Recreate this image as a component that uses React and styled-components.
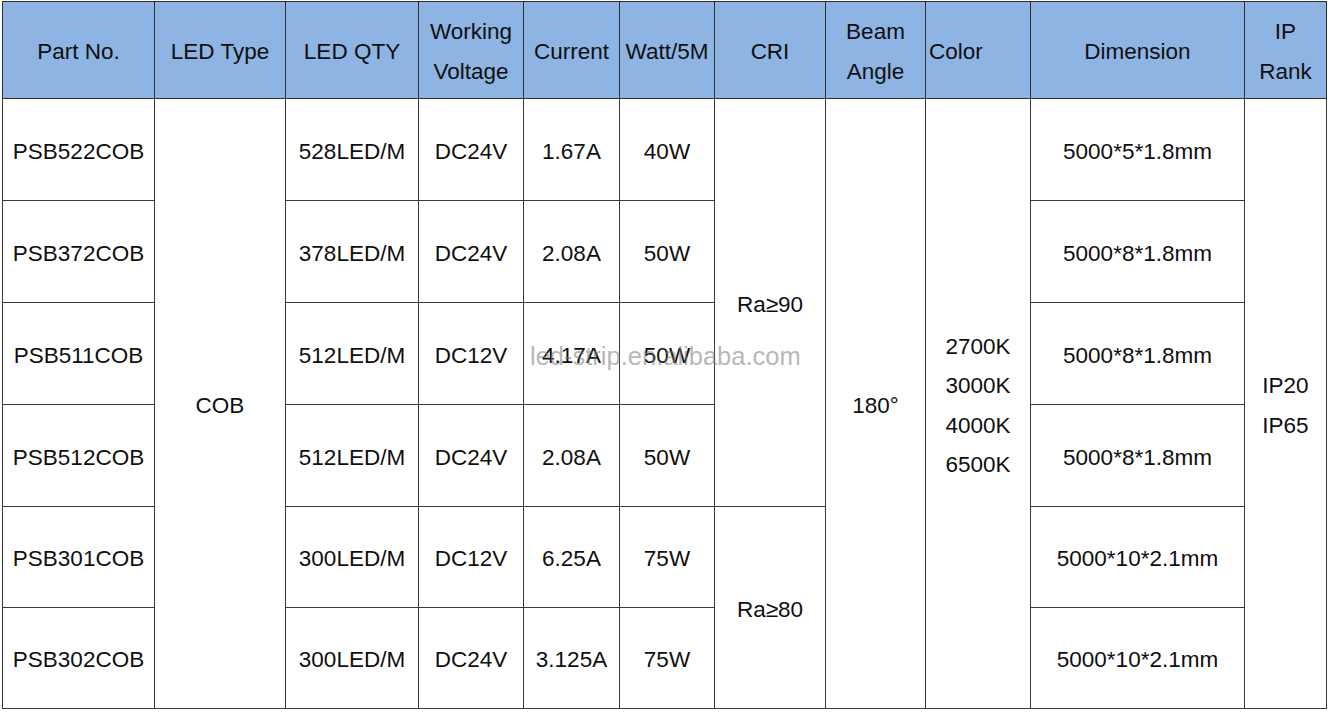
import React from "react";
import styled, { createGlobalStyle } from "styled-components";

const GlobalStyle = createGlobalStyle`
  html, body {
    margin: 0;
    padding: 0;
    background: #ffffff;
  }
  body {
    font-family: "Liberation Sans", Arial, sans-serif;
    color: #0f0f0f;
  }
`;

const Page = styled.div`
  position: relative;
  width: 1330px;
  height: 713px;
  padding: 1px 0 0 2px;
  box-sizing: border-box;
`;

const Table = styled.table`
  border-collapse: collapse;
  table-layout: fixed;
  width: 1324px;
  font-size: 22.5px;
  border: 1.5px solid #333;
`;

const HeadRow = styled.tr`
  height: 97px;
  background-color: #8db4e3;
`;

const BodyRow = styled.tr`
  height: ${(p) => p.$h || 102}px;
`;

const HeadCell = styled.th`
  font-weight: normal;
  line-height: 40px;
  padding: 3px ${(p) => (p.$left ? "3px" : "0")} 0;
  text-align: ${(p) => (p.$left ? "left" : "center")};
  vertical-align: middle;
  border: 1px solid #2e2e2e;
  white-space: nowrap;
`;

const Cell = styled.td`
  text-align: center;
  vertical-align: middle;
  line-height: 39.5px;
  padding: 4px 0 0;
  border: 1px solid #3a3a3a;
  white-space: nowrap;
`;

const Watermark = styled.div`
  position: absolute;
  left: 530px;
  top: 342px;
  font-size: 25.5px;
  color: rgba(120, 120, 120, 0.55);
  pointer-events: none;
  white-space: nowrap;
`;

const widths = [152, 131, 133, 105, 96, 95, 111, 100, 105, 214, 82];

const rows = [
  ["PSB522COB", "528LED/M", "DC24V", "1.67A", "40W", "5000*5*1.8mm"],
  ["PSB372COB", "378LED/M", "DC24V", "2.08A", "50W", "5000*8*1.8mm"],
  ["PSB511COB", "512LED/M", "DC12V", "4.17A", "50W", "5000*8*1.8mm"],
  ["PSB512COB", "512LED/M", "DC24V", "2.08A", "50W", "5000*8*1.8mm"],
  ["PSB301COB", "300LED/M", "DC12V", "6.25A", "75W", "5000*10*2.1mm"],
  ["PSB302COB", "300LED/M", "DC24V", "3.125A", "75W", "5000*10*2.1mm"],
];

export default function App() {
  return (
    <>
      <GlobalStyle />
      <Page>
        <Table>
          <colgroup>
            {widths.map((w, i) => (
              <col key={i} style={{ width: w }} />
            ))}
          </colgroup>
          <thead>
            <HeadRow>
              <HeadCell>Part No.</HeadCell>
              <HeadCell>LED Type</HeadCell>
              <HeadCell>LED QTY</HeadCell>
              <HeadCell>
                Working
                <br />
                Voltage
              </HeadCell>
              <HeadCell>Current</HeadCell>
              <HeadCell>Watt/5M</HeadCell>
              <HeadCell>CRI</HeadCell>
              <HeadCell>
                Beam
                <br />
                Angle
              </HeadCell>
              <HeadCell $left>Color</HeadCell>
              <HeadCell>Dimension</HeadCell>
              <HeadCell>
                IP
                <br />
                Rank
              </HeadCell>
            </HeadRow>
          </thead>
          <tbody>
            {rows.map((r, i) => (
              <BodyRow key={r[0]} $h={i >= 4 ? 101 : 102}>
                <Cell>{r[0]}</Cell>
                {i === 0 && <Cell rowSpan={6}>COB</Cell>}
                <Cell>{r[1]}</Cell>
                <Cell>{r[2]}</Cell>
                <Cell>{r[3]}</Cell>
                <Cell>{r[4]}</Cell>
                {i === 0 && <Cell rowSpan={4}>Ra≥90</Cell>}
                {i === 4 && <Cell rowSpan={2}>Ra≥80</Cell>}
                {i === 0 && <Cell rowSpan={6}>180°</Cell>}
                {i === 0 && (
                  <Cell rowSpan={6}>
                    2700K
                    <br />
                    3000K
                    <br />
                    4000K
                    <br />
                    6500K
                  </Cell>
                )}
                <Cell>{r[5]}</Cell>
                {i === 0 && (
                  <Cell rowSpan={6}>
                    IP20
                    <br />
                    IP65
                  </Cell>
                )}
              </BodyRow>
            ))}
          </tbody>
        </Table>
        <Watermark>led-strip.en.alibaba.com</Watermark>
      </Page>
    </>
  );
}
